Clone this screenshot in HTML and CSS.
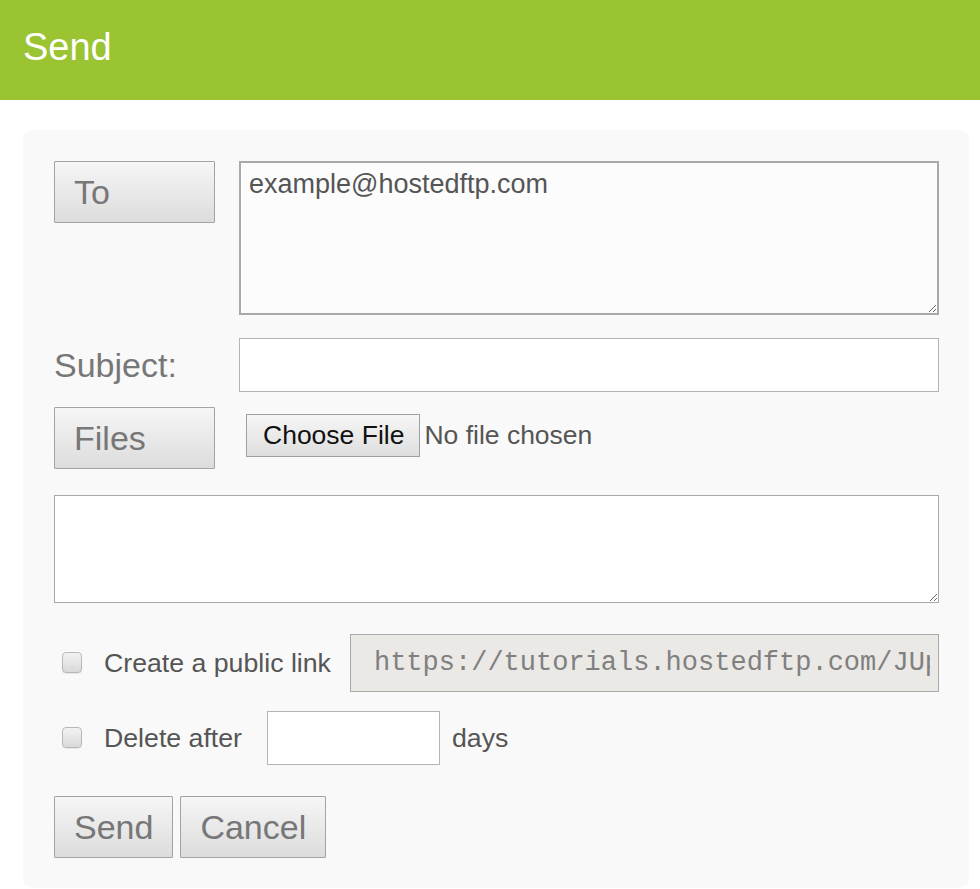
FILE: index.html
```html
<!DOCTYPE html>
<html lang="en">
<head>
  <meta charset="UTF-8">
  <meta name="viewport" content="width=device-width, initial-scale=1.0">
  <title>Send</title>
  <link rel="stylesheet" href="styles.css">
</head>
<body>
  <header class="topbar">
    <h1>Send</h1>
  </header>

  <main class="card">
    <form class="send-form">
      <div class="row row-to">
        <button type="button" class="btn btn-label">To</button>
        <textarea class="field to-field">example@hostedftp.com</textarea>
      </div>

      <div class="row row-subject">
        <label class="label" for="subject">Subject:</label>
        <input type="text" id="subject" class="field subject-field">
      </div>

      <div class="row row-files">
        <button type="button" class="btn btn-label">Files</button>
        <label class="file-picker">
          <span class="file-btn">Choose File</span>
          <span class="file-name">No file chosen</span>
        </label>
      </div>

      <textarea class="field message-field"></textarea>

      <div class="row option option-link">
        <input type="checkbox" class="check" id="public-link">
        <label for="public-link" class="option-text">Create a public link</label>
        <input type="text" class="field link-field" readonly value="https://tutorials.hostedftp.com/JUpR7kx2Qa">
      </div>

      <div class="row option option-delete">
        <input type="checkbox" class="check" id="delete-after">
        <label for="delete-after" class="option-text">Delete after</label>
        <input type="text" class="field days-field">
        <span class="option-text days">days</span>
      </div>

      <div class="row actions">
        <button type="submit" class="btn">Send</button>
        <button type="button" class="btn">Cancel</button>
      </div>
    </form>
  </main>
</body>
</html>
```

FILE: styles.css
```css
/* Base */
body {
  margin: 0;
  background-color: #ffffff;
  font-family: 'Liberation Sans', Arial, sans-serif;
  color: #555555;
}

/* Green title bar */
.topbar {
  display: flex;
  align-items: center;
  height: 100px;
  padding: 0 0 6px 23px;
  box-sizing: border-box;
  background-color: #9bc433;
}

.topbar h1 {
  margin: 0;
  font-size: 38px;
  font-weight: normal;
  color: #ffffff;
}

/* Form card */
.card {
  margin: 30px 11px 0 23px;
  padding: 31px 30px 30px 31px;
  background-color: #f9f9f9;
  border-radius: 10px;
}

.send-form {
  display: flex;
  flex-direction: column;
}

.row {
  display: flex;
  align-items: center;
}

.row-to {
  align-items: flex-start;
}

.row-subject { margin-top: 23px; }
.row-files { margin-top: 15px; }
.message-field { margin-top: 26px; }
.option-link { margin-top: 31px; }
.option-delete { margin-top: 19px; }
.actions { margin-top: 31px; gap: 7px; }

/* Grey gradient buttons */
.btn {
  height: 62px;
  padding: 0 19px;
  border: 1px solid #a3a3a3;
  border-radius: 1px;
  background: linear-gradient(#f6f6f6, #dcdcdc);
  font-family: inherit;
  font-size: 34px;
  color: #777777;
  text-align: left;
  cursor: pointer;
}

.btn-label {
  width: 161px;
  margin-right: 24px;
}

.label {
  width: 185px;
  flex-shrink: 0;
  font-size: 34px;
  color: #777777;
}

/* Text fields */
.field {
  box-sizing: border-box;
  border: 1px solid #b4b4b4;
  background-color: #ffffff;
  font-family: inherit;
  font-size: 26.5px;
  color: #555555;
  outline: none;
}

.to-field {
  flex: 1;
  height: 154px;
  padding: 6px 8px;
  border: 2px solid #a9a9a9;
  background-color: #fcfcfc;
  font-size: 27px;
}

.subject-field {
  flex: 1;
  height: 54px;
  padding: 0 8px;
}

.message-field {
  width: 100%;
  height: 108px;
  padding: 6px 8px;
  border-color: #a9a9a9;
}

/* Fake file chooser */
.file-picker {
  display: flex;
  align-items: center;
  margin-left: 7px;
  margin-top: -5px;
  font-size: 26.5px;
}

.file-btn {
  display: flex;
  align-items: center;
  height: 43px;
  padding: 0 15px 0 16px;
  box-sizing: border-box;
  border: 1px solid #a0a0a0;
  background: linear-gradient(#f6f6f6, #dedede);
  color: #111111;
}

.file-name {
  margin-left: 4px;
  color: #555555;
}

/* Checkbox rows */
.check {
  appearance: none;
  width: 20px;
  height: 21px;
  margin: -2px 22px 0 8px;
  border: 1px solid #b9b9b9;
  border-radius: 4px;
  background: linear-gradient(#f2f2f2, #d9d9d9);
  box-shadow: 0 1px 1px rgba(0, 0, 0, 0.08);
}

.option-text {
  font-size: 26.7px;
  color: #555555;
}

.link-field {
  flex: 1;
  min-width: 0;
  height: 58px;
  margin-left: 19px;
  padding: 0 8px 0 23px;
  border-color: #a9a9a9;
  background-color: #eae9e5;
  font-family: 'Liberation Mono', 'Courier New', monospace;
  font-size: 27px;
  color: #808080;
}

.days-field {
  width: 173px;
  height: 54px;
  margin-left: 25px;
  padding: 0 8px;
}

.days {
  margin-left: 12px;
}
```
